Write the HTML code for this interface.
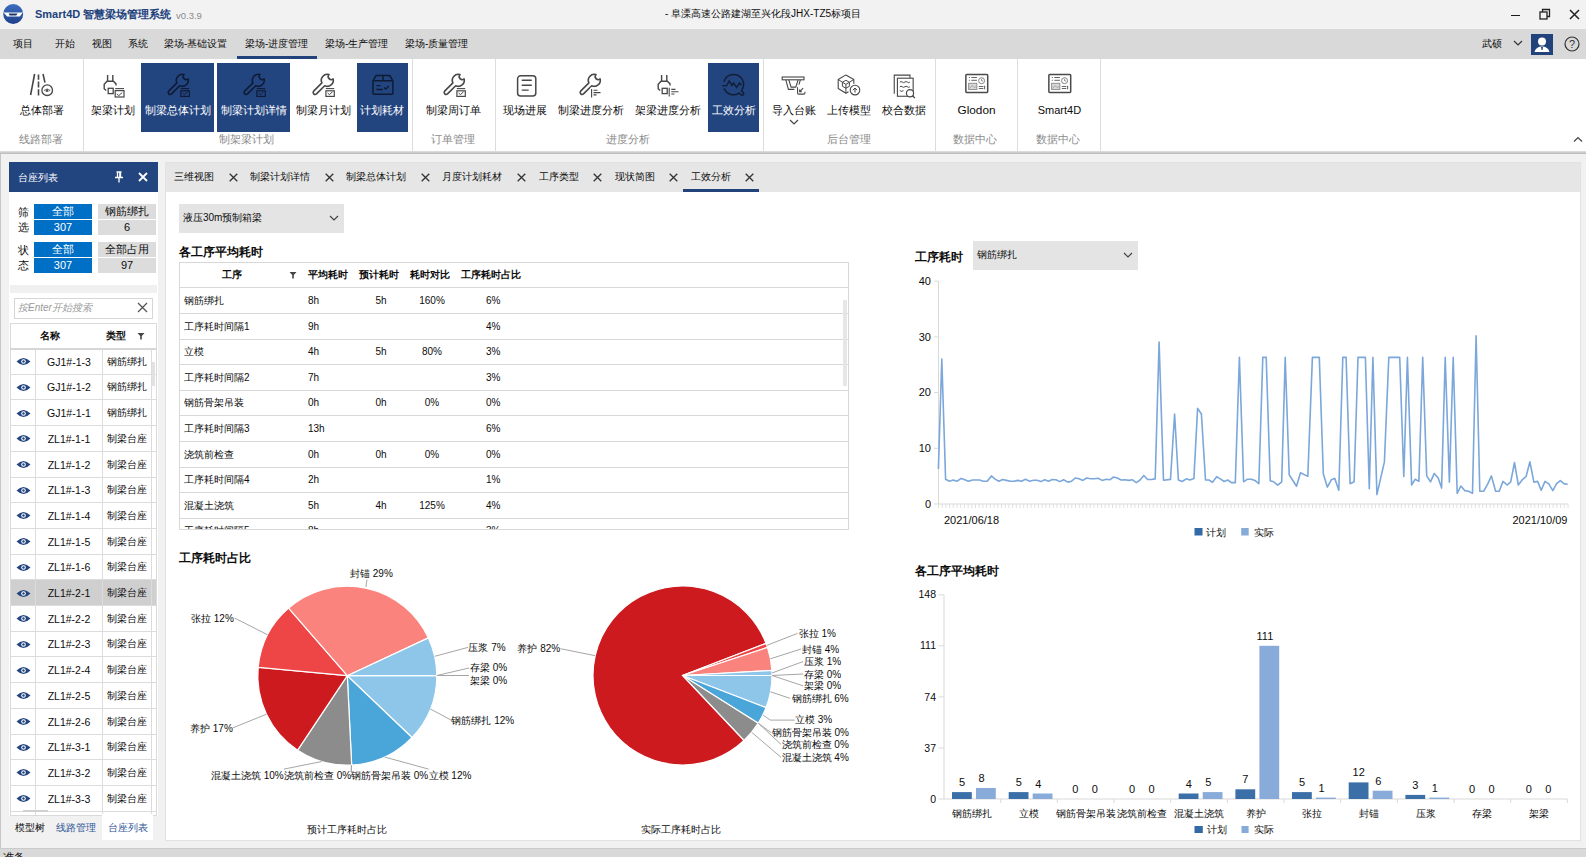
<!DOCTYPE html>
<html><head><meta charset="utf-8">
<style>
*{box-sizing:border-box;margin:0;padding:0}
html,body{width:1586px;height:857px;overflow:hidden}
body{position:relative;background:#f1f1f1;font-family:"Liberation Sans",sans-serif;font-size:10px;color:#0c0c0c}
.a{position:absolute}
.t{position:absolute;white-space:nowrap;line-height:14px}
.c{position:absolute;white-space:nowrap;line-height:14px;text-align:center;width:120px}
svg{position:absolute;overflow:visible}
</style></head><body>

<!-- title bar -->
<div class="a" style="left:0;top:0;width:1586px;height:29px;background:#f2f2f2"></div>
<!-- menu bar -->
<div class="a" style="left:0;top:29px;width:1586px;height:30px;background:#d9d9d9"></div>
<!-- ribbon -->
<div class="a" style="left:0;top:59px;width:1586px;height:93px;background:#fff"></div>
<div class="a" style="left:0;top:151px;width:1586px;height:3px;background:linear-gradient(#e2e2e2,#cdcdcd 50%,#b6b6b6)"></div>
<!-- status bar -->
<div class="a" style="left:0;top:849px;width:1586px;height:8px;background:#d9d9d9"></div>
<div class="a" style="left:0;top:154px;width:1px;height:695px;background:#c6c6c6"></div>


<!-- logo -->
<svg style="left:0;top:0" width="30" height="29" viewBox="0 0 30 29">
<defs><linearGradient id="lg" x1="0" y1="0" x2="0" y2="1"><stop offset="0" stop-color="#3f6fc0"/><stop offset="1" stop-color="#1d3f8a"/></linearGradient></defs>
<circle cx="13.2" cy="14" r="10" fill="url(#lg)"/>
<path d="M3.5 12.6 H22.8 L19.8 16.6 H7.2 Z" fill="#fff"/>
<path d="M8.6 13.4 H17.6 L16.2 15.6 H9.6 Z" fill="#1d3566"/>
</svg>
<div class="t" style="left:35px;top:7px;font-size:11px;font-weight:bold;color:#22427c">Smart4D 智慧梁场管理系统</div>
<div class="t" style="left:176px;top:9px;font-size:9.5px;color:#8a8a8a">v0.3.9</div>
<div class="t" style="left:665px;top:7px;color:#0c0c0c">- 阜溧高速公路建湖至兴化段JHX-TZ5标项目</div>
<!-- window buttons -->
<div class="a" style="left:1510.5px;top:14.5px;width:9.5px;height:1px;background:#1a1a1a"></div>
<svg style="left:1539px;top:8px" width="12" height="12" viewBox="0 0 12 12"><rect x="1" y="4" width="7" height="7" fill="none" stroke="#222" stroke-width="1.3"/><path d="M3.5 4 V1.5 H10.5 V8.5 H8" fill="none" stroke="#222" stroke-width="1.3"/></svg>
<svg style="left:1569px;top:9px" width="11" height="11" viewBox="0 0 11 11"><path d="M1 1 L10 10 M10 1 L1 10" stroke="#222" stroke-width="1.5"/></svg>

<!-- menu -->
<div class="t" style="left:13px;top:37px">项目</div>
<div class="t" style="left:55px;top:37px">开始</div>
<div class="t" style="left:92px;top:37px">视图</div>
<div class="t" style="left:128px;top:37px">系统</div>
<div class="t" style="left:164px;top:37px">梁场-基础设置</div>
<div class="t" style="left:245px;top:37px">梁场-进度管理</div>
<div class="t" style="left:325px;top:37px">梁场-生产管理</div>
<div class="t" style="left:405px;top:37px">梁场-质量管理</div>
<div class="a" style="left:237px;top:56px;width:80px;height:3px;background:#22427c"></div>
<div class="t" style="left:1482px;top:37px">武硕</div>
<svg style="left:1513px;top:40px" width="10" height="7" viewBox="0 0 10 7"><path d="M1 1 L5 5 L9 1" fill="none" stroke="#333" stroke-width="1.2"/></svg>
<div class="a" style="left:1531px;top:34px;width:22px;height:21px;background:#22427c"></div>
<svg style="left:1531px;top:34px" width="22" height="21" viewBox="0 0 22 21"><circle cx="11" cy="7.5" r="4" fill="#fff"/><path d="M3.5 18 Q5 12.5 11 12.5 Q17 12.5 18.5 18 Z" fill="#fff"/><path d="M10 13 L12 13 L11.5 16 L10.5 16 Z" fill="#22427c"/></svg>
<svg style="left:1564px;top:36px" width="16" height="16" viewBox="0 0 16 16"><circle cx="8" cy="8" r="7" fill="none" stroke="#333" stroke-width="1.2"/><text x="8" y="12" text-anchor="middle" font-family="Liberation Sans" font-size="11" fill="#333">?</text></svg>
<div class="a" style="left:83px;top:59px;width:1px;height:92px;background:#dcdcdc"></div>
<div class="a" style="left:412px;top:59px;width:1px;height:92px;background:#dcdcdc"></div>
<div class="a" style="left:495px;top:59px;width:1px;height:92px;background:#dcdcdc"></div>
<div class="a" style="left:763px;top:59px;width:1px;height:92px;background:#dcdcdc"></div>
<div class="a" style="left:935px;top:59px;width:1px;height:92px;background:#dcdcdc"></div>
<div class="a" style="left:1017px;top:59px;width:1px;height:92px;background:#dcdcdc"></div>
<div class="a" style="left:1100px;top:59px;width:1px;height:92px;background:#dcdcdc"></div>
<div class="a" style="left:141px;top:63px;width:73px;height:69px;background:#23457f"></div>
<div class="a" style="left:217px;top:63px;width:73px;height:69px;background:#23457f"></div>
<div class="a" style="left:357px;top:63px;width:51px;height:69px;background:#23457f"></div>
<div class="a" style="left:708px;top:63px;width:51px;height:69px;background:#23457f"></div>
<svg style="left:28px;top:73px" width="26" height="26" viewBox="0 0 26 26">
<path d="M6.6 1 L2.6 22" stroke="#474747" stroke-width="1.6" fill="none"/>
<path d="M10.5 1.6 V6.8 M10.5 8.6 V14.5 M10.5 16.3 V22.4" stroke="#474747" stroke-width="1.6" fill="none"/>
<path d="M15 1 L17 9.6" stroke="#474747" stroke-width="1.6" fill="none"/>
<circle cx="19.2" cy="17.2" r="5.3" fill="#fff" stroke="#474747" stroke-width="1.3"/>
<path d="M16 17.3 Q19.1 14.6 22.2 17.3 Q19.1 20 16 17.3 Z" fill="none" stroke="#777" stroke-width="0.9"/><ellipse cx="19.1" cy="17.3" rx="0.9" ry="1.6" fill="#474747"/>
</svg>
<svg style="left:102px;top:74px" width="24" height="24" viewBox="0 0 24 24"><path d="M5.6 1 V7 M10.8 1 V7 M4.2 16.5 L2.2 14.8 V10.3 L5 7.2 H11.4 L14 9.9 V11.5" fill="none" stroke="#474747" stroke-width="1.4"/><rect x="6.2" y="14.3" width="5" height="5.3" fill="none" stroke="#474747" stroke-width="1.3"/><path d="M13.2 14.6 H22" stroke="#474747" stroke-width="1.1"/><rect x="13.2" y="16.6" width="8.8" height="6.4" fill="none" stroke="#474747" stroke-width="1.2"/><path d="M14.8 20 L16.8 21.6 L20.2 18.6" fill="none" stroke="#474747" stroke-width="1"/></svg>
<svg style="left:167px;top:74px" width="24" height="24" viewBox="0 0 24 24"><path d="M12.71 11.71 L4.48 19.94 A2 2 0 0 1 1.66 17.12 L9.89 8.89 A6 6 0 0 1 17.01 0.55 A3 3 0 0 0 21.13 4.89 A6 6 0 0 1 12.71 11.71 Z" fill="none" stroke="#0f1b35" stroke-width="1.6" stroke-linejoin="round"/><rect x="12.6" y="13.6" width="10.6" height="10" fill="#23457f"/><path d="M13.8 14.6 H22.2" stroke="#0f1b35" stroke-width="1.1"/><rect x="13.9" y="16.8" width="8.4" height="5.6" fill="none" stroke="#0f1b35" stroke-width="1.2"/><path d="M15.6 19 L17.4 20.6 L20.6 17.8" fill="none" stroke="#0f1b35" stroke-width="1"/></svg>
<svg style="left:243px;top:74px" width="24" height="24" viewBox="0 0 24 24"><path d="M12.71 11.71 L4.48 19.94 A2 2 0 0 1 1.66 17.12 L9.89 8.89 A6 6 0 0 1 17.01 0.55 A3 3 0 0 0 21.13 4.89 A6 6 0 0 1 12.71 11.71 Z" fill="none" stroke="#0f1b35" stroke-width="1.6" stroke-linejoin="round"/><rect x="12.6" y="13.6" width="10.6" height="10" fill="#23457f"/><path d="M13.8 14.6 H22.2" stroke="#0f1b35" stroke-width="1.1"/><rect x="13.9" y="16.8" width="8.4" height="5.6" fill="none" stroke="#0f1b35" stroke-width="1.2"/><path d="M15.6 19 L17.4 20.6 L20.6 17.8" fill="none" stroke="#0f1b35" stroke-width="1"/></svg>
<svg style="left:312px;top:74px" width="24" height="24" viewBox="0 0 24 24"><path d="M12.71 11.71 L4.48 19.94 A2 2 0 0 1 1.66 17.12 L9.89 8.89 A6 6 0 0 1 17.01 0.55 A3 3 0 0 0 21.13 4.89 A6 6 0 0 1 12.71 11.71 Z" fill="none" stroke="#474747" stroke-width="1.6" stroke-linejoin="round"/><rect x="12.6" y="13.6" width="10.6" height="10" fill="#fff"/><path d="M13.8 14.6 H22.2" stroke="#474747" stroke-width="1.1"/><rect x="13.9" y="16.8" width="8.4" height="5.6" fill="none" stroke="#474747" stroke-width="1.2"/><path d="M15.6 19 L17.4 20.6 L20.6 17.8" fill="none" stroke="#474747" stroke-width="1"/></svg>
<svg style="left:371px;top:74px" width="24" height="24" viewBox="0 0 24 24">
<path d="M5.1 1.5 H18.75 L21.9 6.85 V19.2 Q21.9 20.15 21 20.15 H3 Q2 20.15 2 19.2 V6.85 Z M2 6.85 H21.9 M12 1.5 V6.85" fill="none" stroke="#0f1b35" stroke-width="1.5" stroke-linejoin="round"/>
<path d="M5.45 11.6 H9.65 M5.45 15.45 H11.75 M13 13.5 L14.8 15.1 L17.75 11.9" fill="none" stroke="#0f1b35" stroke-width="1.4"/>
</svg>
<svg style="left:443px;top:74px" width="24" height="24" viewBox="0 0 24 24"><path d="M12.71 11.71 L4.48 19.94 A2 2 0 0 1 1.66 17.12 L9.89 8.89 A6 6 0 0 1 17.01 0.55 A3 3 0 0 0 21.13 4.89 A6 6 0 0 1 12.71 11.71 Z" fill="none" stroke="#474747" stroke-width="1.6" stroke-linejoin="round"/><rect x="12.6" y="13.6" width="10.6" height="10" fill="#fff"/><path d="M13.8 14.6 H22.2" stroke="#474747" stroke-width="1.1"/><rect x="13.9" y="16.8" width="8.4" height="5.6" fill="none" stroke="#474747" stroke-width="1.2"/><path d="M15.6 19 L17.4 20.6 L20.6 17.8" fill="none" stroke="#474747" stroke-width="1"/></svg>
<svg style="left:515px;top:74px" width="24" height="24" viewBox="0 0 24 24">
<rect x="2.6" y="1.8" width="18.2" height="20.3" rx="3" fill="none" stroke="#474747" stroke-width="1.5"/>
<path d="M7.2 6.3 H16.3 M7.2 11.2 H16.3 M7.2 16.1 H13.2" stroke="#474747" stroke-width="1.4" stroke-linecap="round"/>
</svg>
<svg style="left:579px;top:74px" width="24" height="24" viewBox="0 0 24 24"><path d="M12.71 11.71 L4.48 19.94 A2 2 0 0 1 1.66 17.12 L9.89 8.89 A6 6 0 0 1 17.01 0.55 A3 3 0 0 0 21.13 4.89 A6 6 0 0 1 12.71 11.71 Z" fill="none" stroke="#474747" stroke-width="1.6" stroke-linejoin="round"/><rect x="11.5" y="13.5" width="11" height="10" fill="#fff"/><path d="M12.6 15 V23.5 M14.5 16.2 H18.5 M14.5 18.6 H21.5 M14.5 20.9 H17.5" stroke="#474747" stroke-width="1.1"/></svg>
<svg style="left:656px;top:74px" width="24" height="24" viewBox="0 0 24 24"><path d="M5.6 1 V7 M10.8 1 V7 M4.2 16.5 L2.2 14.8 V10.3 L5 7.2 H11.4 L14 9.9 V11.5" fill="none" stroke="#474747" stroke-width="1.4"/><rect x="6.2" y="14.3" width="5" height="5.3" fill="none" stroke="#474747" stroke-width="1.3"/><path d="M13.2 13.8 V22.6 M15.3 15.4 H19.5 M15.3 17.8 H22.5 M15.3 20 H18.5" stroke="#474747" stroke-width="1.1"/></svg>
<svg style="left:721px;top:74px" width="24" height="24" viewBox="0 0 24 24">
<path d="M3.13 7.2 A10 10 0 1 1 20.45 16.65 L22.4 18.7 A1.5 1.5 0 0 1 20.3 20.8 L18 19.1 A10 10 0 0 1 3.3 14.9" fill="none" stroke="#121e38" stroke-width="1.5" stroke-linecap="round" stroke-linejoin="round"/>
<path d="M1.2 11.75 L5.75 11.6 L8.2 7 L11 11.4 L12.6 9.1 L15.55 13.5 L18.5 8.95 L20.3 11.4" fill="none" stroke="#121e38" stroke-width="1.4" stroke-linejoin="miter"/>
</svg>
<svg style="left:781px;top:74px" width="26" height="24" viewBox="0 0 26 24">
<rect x="1.2" y="3" width="21.8" height="2.8" fill="#fff" stroke="#474747" stroke-width="1.1"/>
<path d="M4.8 5.8 L7.45 15.4 H13.4 M7.8 5.8 L10.1 13.15 H14.8 L17.1 5.8 M19.35 5.8 L17.95 10.7" fill="none" stroke="#474747" stroke-width="1.1"/>
<path d="M16.55 13.3 V19 Q16.55 20.15 17.7 20.15 H22.8 Q23.9 20.15 23.9 19 V17.7" fill="none" stroke="#474747" stroke-width="1.1"/>
<path d="M22.15 14.2 L18.65 17.7 M18.65 15.4 V17.7 H20.95" fill="none" stroke="#474747" stroke-width="1.1"/>
</svg>
<svg style="left:836px;top:74px" width="26" height="24" viewBox="0 0 26 24">
<path d="M9.9 0.9 L17.8 5.45 V9.8 M9.9 0.9 L2.2 5.45 V14.55 L9.9 19.3 L12.5 17.8" fill="none" stroke="#474747" stroke-width="1.1" stroke-linejoin="round"/>
<path d="M2.2 5.45 L6.4 8.25 M17.8 5.45 L13.4 8.25 M9.9 6.3 L13.4 8.25 V12.3 L9.9 14.2 L6.4 12.3 V8.25 Z M6.4 8.25 L9.9 10.35 L13.4 8.25 M9.9 10.35 V19.3" fill="none" stroke="#474747" stroke-width="1" stroke-linejoin="round"/>
<circle cx="19" cy="16.1" r="4.8" fill="#fff" stroke="#474747" stroke-width="1.1"/>
<path d="M19 18.6 V14 M16.9 16.1 L19 14 L21.1 16.1" fill="none" stroke="#474747" stroke-width="1"/>
</svg>
<svg style="left:893px;top:74px" width="26" height="26" viewBox="0 0 26 26">
<path d="M1.25 19.8 V1.1 H17 V4.2" fill="none" stroke="#474747" stroke-width="1.1"/>
<rect x="4.4" y="4.2" width="15.75" height="18.05" fill="#fff" stroke="#474747" stroke-width="1.1"/>
<path d="M6.85 8.1 Q8.1 7 9.35 8.1 T11.85 8.1 T14.35 8.1 T16.85 8.1 M6.85 12.8 Q8.1 11.7 9.35 12.8 T11.85 12.8 T14.35 12.8 T16.85 12.8 M6.85 16.6 Q8.6 18.2 10.5 16.6" fill="none" stroke="#474747" stroke-width="1"/>
<circle cx="17" cy="19.3" r="3.6" fill="#fff" stroke="#474747" stroke-width="1.2"/>
<path d="M19.6 21.9 L21.9 24" stroke="#474747" stroke-width="1.3"/>
</svg>
<svg style="left:965px;top:73px" width="24" height="22" viewBox="0 0 24 22">
<rect x="0.85" y="1.55" width="21.85" height="17.85" rx="0.8" fill="#fff" stroke="#4a4a4a" stroke-width="1.5"/>
<path d="M4.35 4 V5 M4.35 6.8 V7.8 M6.3 4.5 H11.9 M6.3 7.3 H11.9" stroke="#666" stroke-width="1"/>
<circle cx="16.6" cy="7.7" r="3" fill="none" stroke="#777" stroke-width="0.9"/><path d="M16.6 5.8 V7.9 H18.2" fill="none" stroke="#777" stroke-width="0.8"/>
<rect x="3.65" y="10.3" width="8.2" height="6.2" fill="#d9d9d9" stroke="#888" stroke-width="0.9"/>
<path d="M4.5 15.5 L7 12.5 L9 14.5 L10.2 13.5 L11.5 15" fill="none" stroke="#999" stroke-width="0.8"/>
<path d="M13.8 13.45 H18.35 M13.8 15.55 H18.35 M19.6 12.8 V16.2" stroke="#666" stroke-width="1.1"/>
</svg>
<svg style="left:1048px;top:73px" width="24" height="22" viewBox="0 0 24 22">
<rect x="0.85" y="1.55" width="21.85" height="17.85" rx="0.8" fill="#fff" stroke="#4a4a4a" stroke-width="1.5"/>
<path d="M4.35 4 V5 M4.35 6.8 V7.8 M6.3 4.5 H11.9 M6.3 7.3 H11.9" stroke="#666" stroke-width="1"/>
<circle cx="16.6" cy="7.7" r="3" fill="none" stroke="#777" stroke-width="0.9"/><path d="M16.6 5.8 V7.9 H18.2" fill="none" stroke="#777" stroke-width="0.8"/>
<rect x="3.65" y="10.3" width="8.2" height="6.2" fill="#d9d9d9" stroke="#888" stroke-width="0.9"/>
<path d="M4.5 15.5 L7 12.5 L9 14.5 L10.2 13.5 L11.5 15" fill="none" stroke="#999" stroke-width="0.8"/>
<path d="M13.8 13.45 H18.35 M13.8 15.55 H18.35 M19.6 12.8 V16.2" stroke="#666" stroke-width="1.1"/>
</svg>
<div class="c" style="left:-18.5px;top:103px;font-size:11px;color:#0c0c0c">总体部署</div>
<div class="c" style="left:53px;top:103px;font-size:11px;color:#0c0c0c">架梁计划</div>
<div class="c" style="left:117.5px;top:103px;font-size:11px;color:#fff">制梁总体计划</div>
<div class="c" style="left:193.5px;top:103px;font-size:11px;color:#fff">制梁计划详情</div>
<div class="c" style="left:263.3px;top:103px;font-size:11px;color:#0c0c0c">制梁月计划</div>
<div class="c" style="left:322.3px;top:103px;font-size:11px;color:#fff">计划耗材</div>
<div class="c" style="left:393.7px;top:103px;font-size:11px;color:#0c0c0c">制梁周订单</div>
<div class="c" style="left:465.29999999999995px;top:103px;font-size:11px;color:#0c0c0c">现场进展</div>
<div class="c" style="left:531px;top:103px;font-size:11px;color:#0c0c0c">制梁进度分析</div>
<div class="c" style="left:608px;top:103px;font-size:11px;color:#0c0c0c">架梁进度分析</div>
<div class="c" style="left:673.5px;top:103px;font-size:11px;color:#fff">工效分析</div>
<div class="c" style="left:733.8px;top:103px;font-size:11px;color:#0c0c0c">导入台账</div>
<div class="c" style="left:788.5px;top:103px;font-size:11px;color:#0c0c0c">上传模型</div>
<div class="c" style="left:843.7px;top:103px;font-size:11px;color:#0c0c0c">校合数据</div>
<div class="c" style="left:916.5px;top:102.5px;font-size:11.8px;color:#0c0c0c">Glodon</div>
<div class="c" style="left:999.4000000000001px;top:103px;font-size:11px;color:#0c0c0c">Smart4D</div>
<div class="c" style="left:-19px;top:132px;font-size:11px;color:#8a8a8a">线路部署</div>
<div class="c" style="left:186px;top:132px;font-size:11px;color:#8a8a8a">制架梁计划</div>
<div class="c" style="left:392.7px;top:132px;font-size:11px;color:#8a8a8a">订单管理</div>
<div class="c" style="left:568.4px;top:132px;font-size:11px;color:#8a8a8a">进度分析</div>
<div class="c" style="left:788.7px;top:132px;font-size:11px;color:#8a8a8a">后台管理</div>
<div class="c" style="left:915px;top:132px;font-size:11px;color:#8a8a8a">数据中心</div>
<div class="c" style="left:998px;top:132px;font-size:11px;color:#8a8a8a">数据中心</div>
<svg style="left:789px;top:119px" width="10" height="7" viewBox="0 0 10 7"><path d="M1 1 L5 5 L9 1" fill="none" stroke="#444" stroke-width="1.2"/></svg>
<svg style="left:1573px;top:136px" width="10" height="7" viewBox="0 0 10 7"><path d="M1 5.5 L5 1.5 L9 5.5" fill="none" stroke="#444" stroke-width="1.2"/></svg>
<div class="a" style="left:9px;top:162px;width:149px;height:30px;background:#23457f"></div>
<div class="t" style="left:18px;top:171px;color:#fff;font-size:10px">台座列表</div>
<svg style="left:113px;top:171px" width="12" height="12" viewBox="0 0 12 12"><path d="M3.5 1 H8.5 M4.5 1 V6.5 M7.5 1 V6.5 M2 6.5 H10 M6 6.5 V11.5 M6.8 1.5 V6" fill="none" stroke="#fff" stroke-width="1.3"/></svg>
<svg style="left:138px;top:172px" width="10" height="10" viewBox="0 0 10 10"><path d="M1 1 L9 9 M9 1 L1 9" stroke="#fff" stroke-width="1.8"/></svg>
<div class="a" style="left:9px;top:192px;width:149px;height:624px;background:#fff"></div>
<div class="t" style="left:18px;top:205px;font-size:11px;line-height:15px">筛<br>选</div>
<div class="t" style="left:18px;top:243px;font-size:11px;line-height:15px">状<br>态</div>
<div class="a" style="left:34px;top:204px;width:58px;height:15px;background:#0070c6"></div>
<div class="a" style="left:34px;top:220px;width:58px;height:15px;background:#0070c6"></div>
<div class="a" style="left:98px;top:204px;width:58px;height:15px;background:#dcdcdc"></div>
<div class="a" style="left:98px;top:220px;width:58px;height:15px;background:#dcdcdc"></div>
<div class="c" style="left:3px;top:204px;color:#fff;font-size:11px;line-height:15px">全部</div>
<div class="c" style="left:3px;top:220px;color:#fff;font-size:11px;line-height:15px">307</div>
<div class="c" style="left:67px;top:204px;font-size:11px;line-height:15px">钢筋绑扎</div>
<div class="c" style="left:67px;top:220px;font-size:11px;line-height:15px">6</div>
<div class="a" style="left:34px;top:242px;width:58px;height:15px;background:#0070c6"></div>
<div class="a" style="left:34px;top:258px;width:58px;height:15px;background:#0070c6"></div>
<div class="a" style="left:98px;top:242px;width:58px;height:15px;background:#dcdcdc"></div>
<div class="a" style="left:98px;top:258px;width:58px;height:15px;background:#dcdcdc"></div>
<div class="c" style="left:3px;top:242px;color:#fff;font-size:11px;line-height:15px">全部</div>
<div class="c" style="left:3px;top:258px;color:#fff;font-size:11px;line-height:15px">307</div>
<div class="c" style="left:67px;top:242px;font-size:11px;line-height:15px">全部占用</div>
<div class="c" style="left:67px;top:258px;font-size:11px;line-height:15px">97</div>
<div class="a" style="left:10px;top:285px;width:147px;height:8px;background:#f0f0f0"></div>
<div class="a" style="left:14px;top:298px;width:139px;height:21px;border:1px solid #d6d6d6;background:#fff"></div>
<div class="t" style="left:18px;top:301px;font-size:10px;font-style:italic;color:#9a9a9a">按Enter开始搜索</div>
<svg style="left:137px;top:302px" width="11" height="11" viewBox="0 0 11 11"><path d="M1 1 L10 10 M10 1 L1 10" stroke="#555" stroke-width="1.3"/></svg>
<div class="a" style="left:10px;top:323px;width:147px;height:493px;border:1px solid #dadada;background:#fff"></div>
<div class="a" style="left:10px;top:348px;width:147px;height:2px;background:#d6d6d6"></div>
<div class="t" style="left:40px;top:329px;font-weight:bold;font-size:10px">名称</div>
<div class="t" style="left:106px;top:329px;font-weight:bold;font-size:10px">类型</div>
<svg style="left:137px;top:332px" width="8" height="8" viewBox="0 0 8 8"><path d="M0.5 1 H7.5 L4.8 4 V7.5 H3.2 V4 Z" fill="#444"/></svg>
<div class="a" style="left:0;top:348.3px;width:158px;height:466.7px;overflow:hidden">
<div class="a" style="left:11px;top:25.5px;width:145px;height:1px;background:#dcdcdc"></div>
<svg style="left:16px;top:9.0px" width="15" height="9" viewBox="0 0 15 9"><path d="M0.5 4.5 Q7.5 -2.5 14.5 4.5 Q7.5 11.5 0.5 4.5 Z" fill="#23457f"/><circle cx="7.5" cy="4.5" r="2.3" fill="#fff"/><circle cx="7.5" cy="4.5" r="1.2" fill="#23457f"/></svg>
<div class="c" style="left:9px;top:6.5px;font-size:10.5px">GJ1#-1-3</div>
<div class="t" style="left:107px;top:6.5px;font-size:10px">钢筋绑扎</div>
<div class="a" style="left:11px;top:51.2px;width:145px;height:1px;background:#dcdcdc"></div>
<svg style="left:16px;top:34.7px" width="15" height="9" viewBox="0 0 15 9"><path d="M0.5 4.5 Q7.5 -2.5 14.5 4.5 Q7.5 11.5 0.5 4.5 Z" fill="#23457f"/><circle cx="7.5" cy="4.5" r="2.3" fill="#fff"/><circle cx="7.5" cy="4.5" r="1.2" fill="#23457f"/></svg>
<div class="c" style="left:9px;top:32.2px;font-size:10.5px">GJ1#-1-2</div>
<div class="t" style="left:107px;top:32.2px;font-size:10px">钢筋绑扎</div>
<div class="a" style="left:11px;top:76.9px;width:145px;height:1px;background:#dcdcdc"></div>
<svg style="left:16px;top:60.4px" width="15" height="9" viewBox="0 0 15 9"><path d="M0.5 4.5 Q7.5 -2.5 14.5 4.5 Q7.5 11.5 0.5 4.5 Z" fill="#23457f"/><circle cx="7.5" cy="4.5" r="2.3" fill="#fff"/><circle cx="7.5" cy="4.5" r="1.2" fill="#23457f"/></svg>
<div class="c" style="left:9px;top:57.9px;font-size:10.5px">GJ1#-1-1</div>
<div class="t" style="left:107px;top:57.9px;font-size:10px">钢筋绑扎</div>
<div class="a" style="left:11px;top:102.6px;width:145px;height:1px;background:#dcdcdc"></div>
<svg style="left:16px;top:86.1px" width="15" height="9" viewBox="0 0 15 9"><path d="M0.5 4.5 Q7.5 -2.5 14.5 4.5 Q7.5 11.5 0.5 4.5 Z" fill="#23457f"/><circle cx="7.5" cy="4.5" r="2.3" fill="#fff"/><circle cx="7.5" cy="4.5" r="1.2" fill="#23457f"/></svg>
<div class="c" style="left:9px;top:83.6px;font-size:10.5px">ZL1#-1-1</div>
<div class="t" style="left:107px;top:83.6px;font-size:10px">制梁台座</div>
<div class="a" style="left:11px;top:128.3px;width:145px;height:1px;background:#dcdcdc"></div>
<svg style="left:16px;top:111.8px" width="15" height="9" viewBox="0 0 15 9"><path d="M0.5 4.5 Q7.5 -2.5 14.5 4.5 Q7.5 11.5 0.5 4.5 Z" fill="#23457f"/><circle cx="7.5" cy="4.5" r="2.3" fill="#fff"/><circle cx="7.5" cy="4.5" r="1.2" fill="#23457f"/></svg>
<div class="c" style="left:9px;top:109.3px;font-size:10.5px">ZL1#-1-2</div>
<div class="t" style="left:107px;top:109.3px;font-size:10px">制梁台座</div>
<div class="a" style="left:11px;top:154.0px;width:145px;height:1px;background:#dcdcdc"></div>
<svg style="left:16px;top:137.5px" width="15" height="9" viewBox="0 0 15 9"><path d="M0.5 4.5 Q7.5 -2.5 14.5 4.5 Q7.5 11.5 0.5 4.5 Z" fill="#23457f"/><circle cx="7.5" cy="4.5" r="2.3" fill="#fff"/><circle cx="7.5" cy="4.5" r="1.2" fill="#23457f"/></svg>
<div class="c" style="left:9px;top:135.0px;font-size:10.5px">ZL1#-1-3</div>
<div class="t" style="left:107px;top:135.0px;font-size:10px">制梁台座</div>
<div class="a" style="left:11px;top:179.7px;width:145px;height:1px;background:#dcdcdc"></div>
<svg style="left:16px;top:163.2px" width="15" height="9" viewBox="0 0 15 9"><path d="M0.5 4.5 Q7.5 -2.5 14.5 4.5 Q7.5 11.5 0.5 4.5 Z" fill="#23457f"/><circle cx="7.5" cy="4.5" r="2.3" fill="#fff"/><circle cx="7.5" cy="4.5" r="1.2" fill="#23457f"/></svg>
<div class="c" style="left:9px;top:160.7px;font-size:10.5px">ZL1#-1-4</div>
<div class="t" style="left:107px;top:160.7px;font-size:10px">制梁台座</div>
<div class="a" style="left:11px;top:205.4px;width:145px;height:1px;background:#dcdcdc"></div>
<svg style="left:16px;top:188.9px" width="15" height="9" viewBox="0 0 15 9"><path d="M0.5 4.5 Q7.5 -2.5 14.5 4.5 Q7.5 11.5 0.5 4.5 Z" fill="#23457f"/><circle cx="7.5" cy="4.5" r="2.3" fill="#fff"/><circle cx="7.5" cy="4.5" r="1.2" fill="#23457f"/></svg>
<div class="c" style="left:9px;top:186.4px;font-size:10.5px">ZL1#-1-5</div>
<div class="t" style="left:107px;top:186.4px;font-size:10px">制梁台座</div>
<div class="a" style="left:11px;top:231.1px;width:145px;height:1px;background:#dcdcdc"></div>
<svg style="left:16px;top:214.6px" width="15" height="9" viewBox="0 0 15 9"><path d="M0.5 4.5 Q7.5 -2.5 14.5 4.5 Q7.5 11.5 0.5 4.5 Z" fill="#23457f"/><circle cx="7.5" cy="4.5" r="2.3" fill="#fff"/><circle cx="7.5" cy="4.5" r="1.2" fill="#23457f"/></svg>
<div class="c" style="left:9px;top:212.1px;font-size:10.5px">ZL1#-1-6</div>
<div class="t" style="left:107px;top:212.1px;font-size:10px">制梁台座</div>
<div class="a" style="left:11px;top:231.8px;width:145px;height:25px;background:#cfcfcf"></div>
<div class="a" style="left:11px;top:256.8px;width:145px;height:1px;background:#dcdcdc"></div>
<svg style="left:16px;top:240.3px" width="15" height="9" viewBox="0 0 15 9"><path d="M0.5 4.5 Q7.5 -2.5 14.5 4.5 Q7.5 11.5 0.5 4.5 Z" fill="#23457f"/><circle cx="7.5" cy="4.5" r="2.3" fill="#fff"/><circle cx="7.5" cy="4.5" r="1.2" fill="#23457f"/></svg>
<div class="c" style="left:9px;top:237.8px;font-size:10.5px">ZL1#-2-1</div>
<div class="t" style="left:107px;top:237.8px;font-size:10px">制梁台座</div>
<div class="a" style="left:11px;top:282.5px;width:145px;height:1px;background:#dcdcdc"></div>
<svg style="left:16px;top:266.0px" width="15" height="9" viewBox="0 0 15 9"><path d="M0.5 4.5 Q7.5 -2.5 14.5 4.5 Q7.5 11.5 0.5 4.5 Z" fill="#23457f"/><circle cx="7.5" cy="4.5" r="2.3" fill="#fff"/><circle cx="7.5" cy="4.5" r="1.2" fill="#23457f"/></svg>
<div class="c" style="left:9px;top:263.5px;font-size:10.5px">ZL1#-2-2</div>
<div class="t" style="left:107px;top:263.5px;font-size:10px">制梁台座</div>
<div class="a" style="left:11px;top:308.2px;width:145px;height:1px;background:#dcdcdc"></div>
<svg style="left:16px;top:291.7px" width="15" height="9" viewBox="0 0 15 9"><path d="M0.5 4.5 Q7.5 -2.5 14.5 4.5 Q7.5 11.5 0.5 4.5 Z" fill="#23457f"/><circle cx="7.5" cy="4.5" r="2.3" fill="#fff"/><circle cx="7.5" cy="4.5" r="1.2" fill="#23457f"/></svg>
<div class="c" style="left:9px;top:289.2px;font-size:10.5px">ZL1#-2-3</div>
<div class="t" style="left:107px;top:289.2px;font-size:10px">制梁台座</div>
<div class="a" style="left:11px;top:333.9px;width:145px;height:1px;background:#dcdcdc"></div>
<svg style="left:16px;top:317.4px" width="15" height="9" viewBox="0 0 15 9"><path d="M0.5 4.5 Q7.5 -2.5 14.5 4.5 Q7.5 11.5 0.5 4.5 Z" fill="#23457f"/><circle cx="7.5" cy="4.5" r="2.3" fill="#fff"/><circle cx="7.5" cy="4.5" r="1.2" fill="#23457f"/></svg>
<div class="c" style="left:9px;top:314.9px;font-size:10.5px">ZL1#-2-4</div>
<div class="t" style="left:107px;top:314.9px;font-size:10px">制梁台座</div>
<div class="a" style="left:11px;top:359.6px;width:145px;height:1px;background:#dcdcdc"></div>
<svg style="left:16px;top:343.1px" width="15" height="9" viewBox="0 0 15 9"><path d="M0.5 4.5 Q7.5 -2.5 14.5 4.5 Q7.5 11.5 0.5 4.5 Z" fill="#23457f"/><circle cx="7.5" cy="4.5" r="2.3" fill="#fff"/><circle cx="7.5" cy="4.5" r="1.2" fill="#23457f"/></svg>
<div class="c" style="left:9px;top:340.6px;font-size:10.5px">ZL1#-2-5</div>
<div class="t" style="left:107px;top:340.6px;font-size:10px">制梁台座</div>
<div class="a" style="left:11px;top:385.3px;width:145px;height:1px;background:#dcdcdc"></div>
<svg style="left:16px;top:368.8px" width="15" height="9" viewBox="0 0 15 9"><path d="M0.5 4.5 Q7.5 -2.5 14.5 4.5 Q7.5 11.5 0.5 4.5 Z" fill="#23457f"/><circle cx="7.5" cy="4.5" r="2.3" fill="#fff"/><circle cx="7.5" cy="4.5" r="1.2" fill="#23457f"/></svg>
<div class="c" style="left:9px;top:366.3px;font-size:10.5px">ZL1#-2-6</div>
<div class="t" style="left:107px;top:366.3px;font-size:10px">制梁台座</div>
<div class="a" style="left:11px;top:411.0px;width:145px;height:1px;background:#dcdcdc"></div>
<svg style="left:16px;top:394.5px" width="15" height="9" viewBox="0 0 15 9"><path d="M0.5 4.5 Q7.5 -2.5 14.5 4.5 Q7.5 11.5 0.5 4.5 Z" fill="#23457f"/><circle cx="7.5" cy="4.5" r="2.3" fill="#fff"/><circle cx="7.5" cy="4.5" r="1.2" fill="#23457f"/></svg>
<div class="c" style="left:9px;top:392.0px;font-size:10.5px">ZL1#-3-1</div>
<div class="t" style="left:107px;top:392.0px;font-size:10px">制梁台座</div>
<div class="a" style="left:11px;top:436.7px;width:145px;height:1px;background:#dcdcdc"></div>
<svg style="left:16px;top:420.2px" width="15" height="9" viewBox="0 0 15 9"><path d="M0.5 4.5 Q7.5 -2.5 14.5 4.5 Q7.5 11.5 0.5 4.5 Z" fill="#23457f"/><circle cx="7.5" cy="4.5" r="2.3" fill="#fff"/><circle cx="7.5" cy="4.5" r="1.2" fill="#23457f"/></svg>
<div class="c" style="left:9px;top:417.7px;font-size:10.5px">ZL1#-3-2</div>
<div class="t" style="left:107px;top:417.7px;font-size:10px">制梁台座</div>
<div class="a" style="left:11px;top:462.4px;width:145px;height:1px;background:#dcdcdc"></div>
<svg style="left:16px;top:445.9px" width="15" height="9" viewBox="0 0 15 9"><path d="M0.5 4.5 Q7.5 -2.5 14.5 4.5 Q7.5 11.5 0.5 4.5 Z" fill="#23457f"/><circle cx="7.5" cy="4.5" r="2.3" fill="#fff"/><circle cx="7.5" cy="4.5" r="1.2" fill="#23457f"/></svg>
<div class="c" style="left:9px;top:443.4px;font-size:10.5px">ZL1#-3-3</div>
<div class="t" style="left:107px;top:443.4px;font-size:10px">制梁台座</div>
<div class="a" style="left:11px;top:488.1px;width:145px;height:1px;background:#dcdcdc"></div>
<svg style="left:16px;top:471.6px" width="15" height="9" viewBox="0 0 15 9"><path d="M0.5 4.5 Q7.5 -2.5 14.5 4.5 Q7.5 11.5 0.5 4.5 Z" fill="#23457f"/><circle cx="7.5" cy="4.5" r="2.3" fill="#fff"/><circle cx="7.5" cy="4.5" r="1.2" fill="#23457f"/></svg>
<div class="c" style="left:9px;top:469.1px;font-size:10.5px">ZL1#-3-4</div>
<div class="t" style="left:107px;top:469.1px;font-size:10px">制梁台座</div>
</div>
<div class="a" style="left:35px;top:349px;width:1px;height:466px;background:#dcdcdc"></div>
<div class="a" style="left:102px;top:349px;width:1px;height:466px;background:#dcdcdc"></div>
<div class="a" style="left:151px;top:349px;width:1px;height:466px;background:#dcdcdc"></div>
<div class="a" style="left:152px;top:362px;width:3px;height:24px;background:#e2e2e2"></div>
<div class="a" style="left:23px;top:810px;width:25px;height:2px;background:#d0d0d0"></div>
<div class="a" style="left:102px;top:814px;width:51px;height:26px;background:#fff"></div>
<div class="t" style="left:15px;top:821px;font-size:10px">模型树</div>
<div class="t" style="left:56px;top:821px;font-size:10px;color:#2f5597">线路管理</div>
<div class="t" style="left:108px;top:821px;font-size:10px;color:#2f5597">台座列表</div>
<div class="a" style="left:165px;top:162px;width:1416px;height:679px;background:#e2e2e2"></div>
<div class="a" style="left:166px;top:163px;width:1414px;height:29px;background:#e6e6e6"></div>
<div class="a" style="left:166px;top:192px;width:1414px;height:648px;background:#fff"></div>
<div class="t" style="left:174.3px;top:170px">三维视图</div>
<svg style="left:228.5px;top:172.5px" width="9" height="9" viewBox="0 0 9 9"><path d="M0.7 0.7 L8.3 8.3 M8.3 0.7 L0.7 8.3" stroke="#333" stroke-width="1.3"/></svg>
<div class="t" style="left:250.3px;top:170px">制梁计划详情</div>
<svg style="left:324.6px;top:172.5px" width="9" height="9" viewBox="0 0 9 9"><path d="M0.7 0.7 L8.3 8.3 M8.3 0.7 L0.7 8.3" stroke="#333" stroke-width="1.3"/></svg>
<div class="t" style="left:346.4px;top:170px">制梁总体计划</div>
<svg style="left:420.6px;top:172.5px" width="9" height="9" viewBox="0 0 9 9"><path d="M0.7 0.7 L8.3 8.3 M8.3 0.7 L0.7 8.3" stroke="#333" stroke-width="1.3"/></svg>
<div class="t" style="left:442.3px;top:170px">月度计划耗材</div>
<svg style="left:516.5px;top:172.5px" width="9" height="9" viewBox="0 0 9 9"><path d="M0.7 0.7 L8.3 8.3 M8.3 0.7 L0.7 8.3" stroke="#333" stroke-width="1.3"/></svg>
<div class="t" style="left:538.7px;top:170px">工序类型</div>
<svg style="left:592.9px;top:172.5px" width="9" height="9" viewBox="0 0 9 9"><path d="M0.7 0.7 L8.3 8.3 M8.3 0.7 L0.7 8.3" stroke="#333" stroke-width="1.3"/></svg>
<div class="t" style="left:614.5px;top:170px">现状简图</div>
<svg style="left:668.8px;top:172.5px" width="9" height="9" viewBox="0 0 9 9"><path d="M0.7 0.7 L8.3 8.3 M8.3 0.7 L0.7 8.3" stroke="#333" stroke-width="1.3"/></svg>
<div class="t" style="left:691.0px;top:170px">工效分析</div>
<svg style="left:744.5px;top:172.5px" width="9" height="9" viewBox="0 0 9 9"><path d="M0.7 0.7 L8.3 8.3 M8.3 0.7 L0.7 8.3" stroke="#333" stroke-width="1.3"/></svg>
<div class="a" style="left:683px;top:189px;width:76px;height:3px;background:#22427c"></div>
<div class="a" style="left:179px;top:204px;width:165px;height:29px;background:#e4e4e4"></div>
<div class="t" style="left:183px;top:211px">液压30m预制箱梁</div>
<svg style="left:329px;top:215px" width="10" height="7" viewBox="0 0 10 7"><path d="M1 1 L5 5 L9 1" fill="none" stroke="#444" stroke-width="1.2"/></svg>
<div class="t" style="left:179px;top:245px;font-size:12px;font-weight:bold">各工序平均耗时</div>
<div class="a" style="left:179px;top:262px;width:670px;height:268px;border:1px solid #d8d8d8;background:#fff"></div>
<div class="a" style="left:180px;top:287px;width:668px;height:1px;background:#d8d8d8"></div>
<div class="c" style="left:172px;top:268px;font-weight:bold">工序</div>
<svg style="left:289px;top:271px" width="8" height="8" viewBox="0 0 8 8"><path d="M0.5 1 H7.5 L4.8 4 V7.5 H3.2 V4 Z" fill="#444"/></svg>
<div class="t" style="left:308px;top:268px;font-weight:bold">平均耗时</div>
<div class="c" style="left:319px;top:268px;font-weight:bold">预计耗时</div>
<div class="c" style="left:370px;top:268px;font-weight:bold">耗时对比</div>
<div class="c" style="left:431.4px;top:268px;font-weight:bold">工序耗时占比</div>
<div class="a" style="left:180px;top:288px;width:668px;height:241px;overflow:hidden">
<div class="a" style="left:0;top:25.0px;width:668px;height:1px;background:#d8d8d8"></div>
<div class="t" style="left:4px;top:6.0px">钢筋绑扎</div>
<div class="t" style="left:128px;top:6.0px">8h</div>
<div class="c" style="left:141px;top:6.0px">5h</div>
<div class="c" style="left:192px;top:6.0px">160%</div>
<div class="t" style="left:306px;top:6.0px">6%</div>
<div class="a" style="left:0;top:50.6px;width:668px;height:1px;background:#d8d8d8"></div>
<div class="t" style="left:4px;top:31.6px">工序耗时间隔1</div>
<div class="t" style="left:128px;top:31.6px">9h</div>
<div class="c" style="left:141px;top:31.6px"></div>
<div class="c" style="left:192px;top:31.6px"></div>
<div class="t" style="left:306px;top:31.6px">4%</div>
<div class="a" style="left:0;top:76.2px;width:668px;height:1px;background:#d8d8d8"></div>
<div class="t" style="left:4px;top:57.2px">立模</div>
<div class="t" style="left:128px;top:57.2px">4h</div>
<div class="c" style="left:141px;top:57.2px">5h</div>
<div class="c" style="left:192px;top:57.2px">80%</div>
<div class="t" style="left:306px;top:57.2px">3%</div>
<div class="a" style="left:0;top:101.8px;width:668px;height:1px;background:#d8d8d8"></div>
<div class="t" style="left:4px;top:82.8px">工序耗时间隔2</div>
<div class="t" style="left:128px;top:82.8px">7h</div>
<div class="c" style="left:141px;top:82.8px"></div>
<div class="c" style="left:192px;top:82.8px"></div>
<div class="t" style="left:306px;top:82.8px">3%</div>
<div class="a" style="left:0;top:127.4px;width:668px;height:1px;background:#d8d8d8"></div>
<div class="t" style="left:4px;top:108.4px">钢筋骨架吊装</div>
<div class="t" style="left:128px;top:108.4px">0h</div>
<div class="c" style="left:141px;top:108.4px">0h</div>
<div class="c" style="left:192px;top:108.4px">0%</div>
<div class="t" style="left:306px;top:108.4px">0%</div>
<div class="a" style="left:0;top:153.0px;width:668px;height:1px;background:#d8d8d8"></div>
<div class="t" style="left:4px;top:134.0px">工序耗时间隔3</div>
<div class="t" style="left:128px;top:134.0px">13h</div>
<div class="c" style="left:141px;top:134.0px"></div>
<div class="c" style="left:192px;top:134.0px"></div>
<div class="t" style="left:306px;top:134.0px">6%</div>
<div class="a" style="left:0;top:178.6px;width:668px;height:1px;background:#d8d8d8"></div>
<div class="t" style="left:4px;top:159.6px">浇筑前检查</div>
<div class="t" style="left:128px;top:159.6px">0h</div>
<div class="c" style="left:141px;top:159.6px">0h</div>
<div class="c" style="left:192px;top:159.6px">0%</div>
<div class="t" style="left:306px;top:159.6px">0%</div>
<div class="a" style="left:0;top:204.2px;width:668px;height:1px;background:#d8d8d8"></div>
<div class="t" style="left:4px;top:185.2px">工序耗时间隔4</div>
<div class="t" style="left:128px;top:185.2px">2h</div>
<div class="c" style="left:141px;top:185.2px"></div>
<div class="c" style="left:192px;top:185.2px"></div>
<div class="t" style="left:306px;top:185.2px">1%</div>
<div class="a" style="left:0;top:229.8px;width:668px;height:1px;background:#d8d8d8"></div>
<div class="t" style="left:4px;top:210.8px">混凝土浇筑</div>
<div class="t" style="left:128px;top:210.8px">5h</div>
<div class="c" style="left:141px;top:210.8px">4h</div>
<div class="c" style="left:192px;top:210.8px">125%</div>
<div class="t" style="left:306px;top:210.8px">4%</div>
<div class="a" style="left:0;top:255.4px;width:668px;height:1px;background:#d8d8d8"></div>
<div class="t" style="left:4px;top:236.4px">工序耗时间隔5</div>
<div class="t" style="left:128px;top:236.4px">8h</div>
<div class="c" style="left:141px;top:236.4px"></div>
<div class="c" style="left:192px;top:236.4px"></div>
<div class="t" style="left:306px;top:236.4px">3%</div>
</div>
<div class="a" style="left:843px;top:300px;width:4px;height:86px;background:#e6e6e6"></div>
<div class="a" style="left:973px;top:241px;width:165px;height:29px;background:#e4e4e4"></div>
<div class="t" style="left:977px;top:248px">钢筋绑扎</div>
<svg style="left:1122.5px;top:252px" width="10" height="7" viewBox="0 0 10 7"><path d="M1 1 L5 5 L9 1" fill="none" stroke="#444" stroke-width="1.2"/></svg>
<div class="a" style="left:0;top:848px;width:1586px;height:1px;background:#cacaca"></div>
<div class="t" style="left:3px;top:850px;font-size:11px;color:#111">准备</div>
<!--CHARTS--><svg style="left:0;top:0" width="1586" height="857" viewBox="0 0 1586 857" font-family="Liberation Sans, sans-serif" font-size="10" fill="#0c0c0c">
<path d="M347.30 675.70 L436.80 675.70 A89.5 89.5 0 0 1 412.01 737.53 Z" fill="#8ec6ea" stroke="#fff" stroke-width="1.2"/>
<path d="M347.30 675.70 L412.01 737.53 A89.5 89.5 0 0 1 351.67 765.09 Z" fill="#4aa6d8" stroke="#fff" stroke-width="1.2"/>
<path d="M347.30 675.70 L351.67 765.09 A89.5 89.5 0 0 1 297.64 750.16 Z" fill="#8c8c8c" stroke="#fff" stroke-width="1.2"/>
<path d="M347.30 675.70 L297.64 750.16 A89.5 89.5 0 0 1 258.20 667.28 Z" fill="#cc1a1e" stroke="#fff" stroke-width="1.2"/>
<path d="M347.30 675.70 L258.20 667.28 A89.5 89.5 0 0 1 288.58 608.15 Z" fill="#ee4547" stroke="#fff" stroke-width="1.2"/>
<path d="M347.30 675.70 L288.58 608.15 A89.5 89.5 0 0 1 428.41 637.88 Z" fill="#fb837d" stroke="#fff" stroke-width="1.2"/>
<path d="M347.30 675.70 L428.41 637.88 A89.5 89.5 0 0 1 436.80 675.70 Z" fill="#8ec6ea" stroke="#fff" stroke-width="1.2"/>
<path d="M365.9 587 L367 579.5" stroke="#a6a6a6" stroke-width="1" fill="none"/>
<path d="M267.7 634.8 L234.5 618" stroke="#a6a6a6" stroke-width="1" fill="none"/>
<path d="M266.5 714.2 L232.5 728" stroke="#a6a6a6" stroke-width="1" fill="none"/>
<path d="M434.7 656.3 L468 647.4" stroke="#a6a6a6" stroke-width="1" fill="none"/>
<path d="M436.8 675.5 L469 668" stroke="#a6a6a6" stroke-width="1" fill="none"/>
<path d="M436.8 675.5 L469 675.5" stroke="#a6a6a6" stroke-width="1" fill="none"/>
<path d="M430.4 709 L451 720" stroke="#a6a6a6" stroke-width="1" fill="none"/>
<path d="M384.5 757 L428.6 769.1" stroke="#a6a6a6" stroke-width="1" fill="none"/>
<path d="M351.5 765 L351.5 773" stroke="#a6a6a6" stroke-width="1" fill="none"/>
<path d="M351.5 765 L351 772" stroke="#a6a6a6" stroke-width="1" fill="none"/>
<path d="M321.8 761.5 L283.9 769.1" stroke="#a6a6a6" stroke-width="1" fill="none"/>
<text x="350" y="577">封锚 29%</text>
<text x="191" y="621.5">张拉 12%</text>
<text x="190" y="731.5">养护 17%</text>
<text x="468.4" y="651">压浆 7%</text>
<text x="470" y="671.3">存梁 0%</text>
<text x="470" y="684">架梁 0%</text>
<text x="451.4" y="723.7">钢筋绑扎 12%</text>
<text x="210.9" y="779.3">混凝土浇筑 10%</text>
<text x="283.9" y="779.3">浇筑前检查 0%</text>
<text x="351" y="779.3">钢筋骨架吊装 0%</text>
<text x="428.6" y="779.3">立模 12%</text>
<path d="M682.50 675.50 L772.00 675.50 A89.5 89.5 0 0 1 766.06 707.57 Z" fill="#8ec6ea" stroke="#fff" stroke-width="1.2"/>
<path d="M682.50 675.50 L766.06 707.57 A89.5 89.5 0 0 1 758.23 723.19 Z" fill="#4aa6d8" stroke="#fff" stroke-width="1.2"/>
<path d="M682.50 675.50 L758.23 723.19 A89.5 89.5 0 0 1 743.99 740.53 Z" fill="#8c8c8c" stroke="#fff" stroke-width="1.2"/>
<path d="M682.50 675.50 L743.99 740.53 A89.5 89.5 0 1 1 766.06 643.43 Z" fill="#cc1a1e" stroke="#fff" stroke-width="1.2"/>
<path d="M682.50 675.50 L766.06 643.43 A89.5 89.5 0 0 1 767.47 647.40 Z" fill="#ee4547" stroke="#fff" stroke-width="1.2"/>
<path d="M682.50 675.50 L767.47 647.40 A89.5 89.5 0 0 1 771.86 670.50 Z" fill="#fb837d" stroke="#fff" stroke-width="1.2"/>
<path d="M682.50 675.50 L771.86 670.50 A89.5 89.5 0 0 1 772.00 675.50 Z" fill="#8ec6ea" stroke="#fff" stroke-width="1.2"/>
<path d="M595.2 655.7 L560.5 648.7" stroke="#a6a6a6" stroke-width="1" fill="none"/>
<path d="M766.8 645.4 L797.5 633.4" stroke="#a6a6a6" stroke-width="1" fill="none"/>
<path d="M770.4 658.8 L801 649" stroke="#a6a6a6" stroke-width="1" fill="none"/>
<path d="M771.9 673 L803 661.6" stroke="#a6a6a6" stroke-width="1" fill="none"/>
<path d="M772 675.5 L803 674" stroke="#a6a6a6" stroke-width="1" fill="none"/>
<path d="M772 675.5 L803 685.8" stroke="#a6a6a6" stroke-width="1" fill="none"/>
<path d="M770.4 691.8 L790 698.3" stroke="#a6a6a6" stroke-width="1" fill="none"/>
<path d="M763.3 715.2 L770.3 720.1" stroke="#a6a6a6" stroke-width="1" fill="none"/>
<path d="M770.3 720.1 L794.7 720.1" stroke="#a6a6a6" stroke-width="1" fill="none"/>
<path d="M758.3 723.2 L771 732.6" stroke="#a6a6a6" stroke-width="1" fill="none"/>
<path d="M758.3 723.2 L781 744.4" stroke="#a6a6a6" stroke-width="1" fill="none"/>
<path d="M751.7 732.3 L781 757.3" stroke="#a6a6a6" stroke-width="1" fill="none"/>
<text x="517.4" y="652.3">养护 82%</text>
<text x="798.7" y="637">张拉 1%</text>
<text x="802" y="652.6">封锚 4%</text>
<text x="804" y="665.2">压浆 1%</text>
<text x="804" y="677.6">存梁 0%</text>
<text x="804" y="689.4">架梁 0%</text>
<text x="791.5" y="701.9">钢筋绑扎 6%</text>
<text x="795" y="722.6">立模 3%</text>
<text x="771.7" y="736.2">钢筋骨架吊装 0%</text>
<text x="781.6" y="748">浇筑前检查 0%</text>
<text x="781.6" y="760.9">混凝土浇筑 4%</text>
<text x="306.7" y="833" >预计工序耗时占比</text>
<text x="641.3" y="833.4">实际工序耗时占比</text>
<text x="179" y="562" font-size="12" font-weight="bold">工序耗时占比</text>
<path d="M938.5 281.2 V504 H1568" stroke="#d9d9d9" stroke-width="1" fill="none"/>
<path d="M934 504.0 H938.5" stroke="#d9d9d9" stroke-width="1"/>
<text x="931" y="507.6" text-anchor="end" font-size="11">0</text>
<path d="M934 448.3 H938.5" stroke="#d9d9d9" stroke-width="1"/>
<text x="931" y="451.9" text-anchor="end" font-size="11">10</text>
<path d="M934 392.6 H938.5" stroke="#d9d9d9" stroke-width="1"/>
<text x="931" y="396.2" text-anchor="end" font-size="11">20</text>
<path d="M934 336.9 H938.5" stroke="#d9d9d9" stroke-width="1"/>
<text x="931" y="340.5" text-anchor="end" font-size="11">30</text>
<path d="M934 281.2 H938.5" stroke="#d9d9d9" stroke-width="1"/>
<text x="931" y="284.8" text-anchor="end" font-size="11">40</text>
<path d="M938.5 504 V508 M942.2 504 V508 M945.9 504 V508 M949.6 504 V508 M953.3 504 V508 M957.0 504 V508 M960.7 504 V508 M964.4 504 V508 M968.1 504 V508 M971.8 504 V508 M975.5 504 V508 M979.2 504 V508 M982.9 504 V508 M986.6 504 V508 M990.3 504 V508 M994.0 504 V508 M997.7 504 V508 M1001.5 504 V508 M1005.2 504 V508 M1008.9 504 V508 M1012.6 504 V508 M1016.3 504 V508 M1020.0 504 V508 M1023.7 504 V508 M1027.4 504 V508 M1031.1 504 V508 M1034.8 504 V508 M1038.5 504 V508 M1042.2 504 V508 M1045.9 504 V508 M1049.6 504 V508 M1053.3 504 V508 M1057.0 504 V508 M1060.7 504 V508 M1064.4 504 V508 M1068.1 504 V508 M1071.8 504 V508 M1075.5 504 V508 M1079.2 504 V508 M1082.9 504 V508 M1086.6 504 V508 M1090.3 504 V508 M1094.0 504 V508 M1097.7 504 V508 M1101.4 504 V508 M1105.1 504 V508 M1108.8 504 V508 M1112.5 504 V508 M1116.2 504 V508 M1119.9 504 V508 M1123.7 504 V508 M1127.4 504 V508 M1131.1 504 V508 M1134.8 504 V508 M1138.5 504 V508 M1142.2 504 V508 M1145.9 504 V508 M1149.6 504 V508 M1153.3 504 V508 M1157.0 504 V508 M1160.7 504 V508 M1164.4 504 V508 M1168.1 504 V508 M1171.8 504 V508 M1175.5 504 V508 M1179.2 504 V508 M1182.9 504 V508 M1186.6 504 V508 M1190.3 504 V508 M1194.0 504 V508 M1197.7 504 V508 M1201.4 504 V508 M1205.1 504 V508 M1208.8 504 V508 M1212.5 504 V508 M1216.2 504 V508 M1219.9 504 V508 M1223.6 504 V508 M1227.3 504 V508 M1231.0 504 V508 M1234.7 504 V508 M1238.4 504 V508 M1242.1 504 V508 M1245.8 504 V508 M1249.6 504 V508 M1253.3 504 V508 M1257.0 504 V508 M1260.7 504 V508 M1264.4 504 V508 M1268.1 504 V508 M1271.8 504 V508 M1275.5 504 V508 M1279.2 504 V508 M1282.9 504 V508 M1286.6 504 V508 M1290.3 504 V508 M1294.0 504 V508 M1297.7 504 V508 M1301.4 504 V508 M1305.1 504 V508 M1308.8 504 V508 M1312.5 504 V508 M1316.2 504 V508 M1319.9 504 V508 M1323.6 504 V508 M1327.3 504 V508 M1331.0 504 V508 M1334.7 504 V508 M1338.4 504 V508 M1342.1 504 V508 M1345.8 504 V508 M1349.5 504 V508 M1353.2 504 V508 M1356.9 504 V508 M1360.6 504 V508 M1364.3 504 V508 M1368.0 504 V508 M1371.8 504 V508 M1375.5 504 V508 M1379.2 504 V508 M1382.9 504 V508 M1386.6 504 V508 M1390.3 504 V508 M1394.0 504 V508 M1397.7 504 V508 M1401.4 504 V508 M1405.1 504 V508 M1408.8 504 V508 M1412.5 504 V508 M1416.2 504 V508 M1419.9 504 V508 M1423.6 504 V508 M1427.3 504 V508 M1431.0 504 V508 M1434.7 504 V508 M1438.4 504 V508 M1442.1 504 V508 M1445.8 504 V508 M1449.5 504 V508 M1453.2 504 V508 M1456.9 504 V508 M1460.6 504 V508 M1464.3 504 V508 M1468.0 504 V508 M1471.7 504 V508 M1475.4 504 V508 M1479.1 504 V508 M1482.8 504 V508 M1486.5 504 V508 M1490.2 504 V508 M1493.9 504 V508 M1497.7 504 V508 M1501.4 504 V508 M1505.1 504 V508 M1508.8 504 V508 M1512.5 504 V508 M1516.2 504 V508 M1519.9 504 V508 M1523.6 504 V508 M1527.3 504 V508 M1531.0 504 V508 M1534.7 504 V508 M1538.4 504 V508 M1542.1 504 V508 M1545.8 504 V508 M1549.5 504 V508 M1553.2 504 V508 M1556.9 504 V508 M1560.6 504 V508 M1564.3 504 V508 M1568.0 504 V508 " stroke="#e0e0e0" stroke-width="1"/>
<path d="M938.4 469.1 L941.8 359 L945.6 479.3 L949.4 481.2 L953.2 480 L956.9 481.3 L961.1 478.4 L964.9 479.7 L968.3 481.3 L972.5 480 L976 480 L979.6 480 L983.4 481.3 L987.2 481.3 L991.4 475.9 L995.1 479.1 L998.9 481.3 L1002.7 479.5 L1006.5 480.4 L1010.3 481.3 L1014.1 481.3 L1017.8 480.4 L1021.6 481.3 L1025.4 479.3 L1029.6 481.3 L1033.4 480.3 L1037.1 480.3 L1040.9 481.6 L1044.7 479.8 L1048.5 481.3 L1052.3 479.6 L1056 479.8 L1059.8 481.6 L1063.6 479.8 L1067.8 482.1 L1071.6 481.2 L1075.3 478 L1079.1 478.8 L1082.9 480.4 L1086.7 478 L1090.5 478.8 L1094.3 478.8 L1098 478.3 L1102.2 480.4 L1106 479.3 L1109.8 479.8 L1113.6 477 L1117.3 478 L1121.1 480 L1124.9 479.8 L1128.7 480.4 L1132.5 479.8 L1136.3 482.7 L1140 480 L1143.8 475.5 L1147.6 479.5 L1151.4 479.5 L1155.2 478.9 L1159.1 342 L1163.5 480.3 L1170.5 479.4 L1174.6 414 L1178.4 480 L1182.2 481.5 L1186.3 478.8 L1189.8 480 L1193.9 478.4 L1197.6 408.4 L1201.4 414 L1205.5 480 L1209 480 L1212.5 482.3 L1216.6 476.8 L1220.7 479.1 L1224.2 481.5 L1227.7 480 L1231.4 482.6 L1235.3 482.6 L1239.4 357.4 L1243.6 481.8 L1247.5 479.2 L1251.5 479.2 L1254.9 480.4 L1258.8 483.7 L1262.8 357.4 L1266.2 357.4 L1270.2 480.8 L1273.7 481.8 L1277.7 485.1 L1281.7 481.8 L1285.2 357.4 L1289.2 474.8 L1296.5 486.3 L1300.5 472.8 L1307.8 476.4 L1312.4 357.4 L1319.3 357.4 L1323.3 473.8 L1327.3 487.1 L1331.3 479.8 L1334.8 478.4 L1338.8 490.3 L1342.8 357.4 L1346.1 357.4 L1350.1 483.7 L1354.1 481.8 L1358 357.4 L1365.4 357.4 L1369.3 488.7 L1372.9 357.4 L1376.9 494.6 L1384.4 461.9 L1388.8 357.4 L1399.7 357.4 L1403.8 476.5 L1407.4 357.4 L1411.6 485 L1415.1 479.3 L1418.9 481.4 L1422.7 357.4 L1426.7 475.9 L1430.5 481.8 L1434.3 473.4 L1438.2 478 L1441.6 488.1 L1445.2 357.4 L1449.4 482.2 L1453.2 357.4 L1457.2 493.4 L1460.9 486 L1464.7 490.6 L1468.7 491.3 L1472.5 493.4 L1476.1 335.8 L1479.8 491.3 L1483.6 491.3 L1487.8 483.9 L1491.4 475.9 L1495.6 491.3 L1499.2 491.3 L1503 481.4 L1507.2 485 L1510.7 481.8 L1514.5 462.5 L1518.3 485 L1522.3 479.7 L1526.1 476.5 L1529.9 461.8 L1533.9 482.2 L1537.6 481.4 L1541.2 490.2 L1545 481.4 L1548.8 483.9 L1552.8 490.6 L1556.5 483.9 L1560.3 480.7 L1564.3 483.9 L1567.7 484.3" fill="none" stroke="#7ba7da" stroke-width="1.6" stroke-linejoin="round"/>
<text x="944" y="523.5" font-size="11">2021/06/18</text>
<text x="1567.5" y="523.5" font-size="11" text-anchor="end">2021/10/09</text>
<rect x="1194.5" y="528" width="8" height="7.5" fill="#336aa6"/><text x="1206" y="535.5">计划</text>
<rect x="1241.2" y="528" width="7.5" height="7.5" fill="#86abd9"/><text x="1254.3" y="535.5">实际</text>
<text x="915" y="261" font-size="12" font-weight="bold">工序耗时</text>
<path d="M944 594.8 V799 H1567.4" stroke="#d9d9d9" stroke-width="1" fill="none"/>
<path d="M938.5 799.0 H944" stroke="#d9d9d9" stroke-width="1"/>
<text x="936" y="802.6" text-anchor="end" font-size="10.5">0</text>
<path d="M938.5 748.0 H944" stroke="#d9d9d9" stroke-width="1"/>
<text x="936" y="751.6" text-anchor="end" font-size="10.5">37</text>
<path d="M938.5 696.9 H944" stroke="#d9d9d9" stroke-width="1"/>
<text x="936" y="700.5" text-anchor="end" font-size="10.5">74</text>
<path d="M938.5 645.8 H944" stroke="#d9d9d9" stroke-width="1"/>
<text x="936" y="649.4" text-anchor="end" font-size="10.5">111</text>
<path d="M938.5 594.8 H944" stroke="#d9d9d9" stroke-width="1"/>
<text x="936" y="598.4" text-anchor="end" font-size="10.5">148</text>
<path d="M1000.7 799 V803" stroke="#d9d9d9" stroke-width="1"/>
<rect x="952.0" y="792.1" width="19.8" height="6.9" fill="#3a6fa8"/>
<text x="962.0" y="786.1" text-anchor="middle" font-size="11">5</text>
<rect x="976.0" y="788.0" width="19.8" height="11.0" fill="#88abd9"/>
<text x="981.5" y="782.0" text-anchor="middle" font-size="11">8</text>
<text x="972.3" y="817" text-anchor="middle">钢筋绑扎</text>
<path d="M1057.3 799 V803" stroke="#d9d9d9" stroke-width="1"/>
<rect x="1008.7" y="792.1" width="19.8" height="6.9" fill="#3a6fa8"/>
<text x="1018.7" y="786.1" text-anchor="middle" font-size="11">5</text>
<rect x="1032.7" y="793.5" width="19.8" height="5.5" fill="#88abd9"/>
<text x="1038.2" y="787.5" text-anchor="middle" font-size="11">4</text>
<text x="1029.0" y="817" text-anchor="middle">立模</text>
<path d="M1114.0 799 V803" stroke="#d9d9d9" stroke-width="1"/>
<text x="1075.3" y="793.0" text-anchor="middle" font-size="11">0</text>
<text x="1094.8" y="793.0" text-anchor="middle" font-size="11">0</text>
<text x="1085.7" y="817" text-anchor="middle">钢筋骨架吊装</text>
<path d="M1170.7 799 V803" stroke="#d9d9d9" stroke-width="1"/>
<text x="1132.0" y="793.0" text-anchor="middle" font-size="11">0</text>
<text x="1151.5" y="793.0" text-anchor="middle" font-size="11">0</text>
<text x="1142.4" y="817" text-anchor="middle">浇筑前检查</text>
<path d="M1227.4 799 V803" stroke="#d9d9d9" stroke-width="1"/>
<rect x="1178.7" y="793.5" width="19.8" height="5.5" fill="#3a6fa8"/>
<text x="1188.7" y="787.5" text-anchor="middle" font-size="11">4</text>
<rect x="1202.7" y="792.1" width="19.8" height="6.9" fill="#88abd9"/>
<text x="1208.2" y="786.1" text-anchor="middle" font-size="11">5</text>
<text x="1199.0" y="817" text-anchor="middle">混凝土浇筑</text>
<path d="M1284.0 799 V803" stroke="#d9d9d9" stroke-width="1"/>
<rect x="1235.4" y="789.3" width="19.8" height="9.7" fill="#3a6fa8"/>
<text x="1245.4" y="783.3" text-anchor="middle" font-size="11">7</text>
<rect x="1259.4" y="645.8" width="19.8" height="153.2" fill="#88abd9"/>
<text x="1264.9" y="639.8" text-anchor="middle" font-size="11">111</text>
<text x="1255.7" y="817" text-anchor="middle">养护</text>
<path d="M1340.7 799 V803" stroke="#d9d9d9" stroke-width="1"/>
<rect x="1292.0" y="792.1" width="19.8" height="6.9" fill="#3a6fa8"/>
<text x="1302.0" y="786.1" text-anchor="middle" font-size="11">5</text>
<rect x="1316.0" y="797.6" width="19.8" height="1.4" fill="#88abd9"/>
<text x="1321.5" y="791.6" text-anchor="middle" font-size="11">1</text>
<text x="1312.4" y="817" text-anchor="middle">张拉</text>
<path d="M1397.4 799 V803" stroke="#d9d9d9" stroke-width="1"/>
<rect x="1348.7" y="782.4" width="19.8" height="16.6" fill="#3a6fa8"/>
<text x="1358.7" y="776.4" text-anchor="middle" font-size="11">12</text>
<rect x="1372.7" y="790.7" width="19.8" height="8.3" fill="#88abd9"/>
<text x="1378.2" y="784.7" text-anchor="middle" font-size="11">6</text>
<text x="1369.0" y="817" text-anchor="middle">封锚</text>
<path d="M1454.1 799 V803" stroke="#d9d9d9" stroke-width="1"/>
<rect x="1405.4" y="794.9" width="19.8" height="4.1" fill="#3a6fa8"/>
<text x="1415.4" y="788.9" text-anchor="middle" font-size="11">3</text>
<rect x="1429.4" y="797.6" width="19.8" height="1.4" fill="#88abd9"/>
<text x="1434.9" y="791.6" text-anchor="middle" font-size="11">1</text>
<text x="1425.7" y="817" text-anchor="middle">压浆</text>
<path d="M1510.7 799 V803" stroke="#d9d9d9" stroke-width="1"/>
<text x="1472.1" y="793.0" text-anchor="middle" font-size="11">0</text>
<text x="1491.6" y="793.0" text-anchor="middle" font-size="11">0</text>
<text x="1482.4" y="817" text-anchor="middle">存梁</text>
<path d="M1567.4 799 V803" stroke="#d9d9d9" stroke-width="1"/>
<text x="1528.7" y="793.0" text-anchor="middle" font-size="11">0</text>
<text x="1548.2" y="793.0" text-anchor="middle" font-size="11">0</text>
<text x="1539.1" y="817" text-anchor="middle">架梁</text>
<rect x="1194.5" y="826" width="8.3" height="7" fill="#336aa6"/><text x="1207.4" y="833.2">计划</text>
<rect x="1241.5" y="826" width="7.1" height="7" fill="#86abd9"/><text x="1254.4" y="833.2">实际</text>
<text x="915" y="574.5" font-size="12" font-weight="bold">各工序平均耗时</text>
</svg><!--/CHARTS-->
</body></html>
